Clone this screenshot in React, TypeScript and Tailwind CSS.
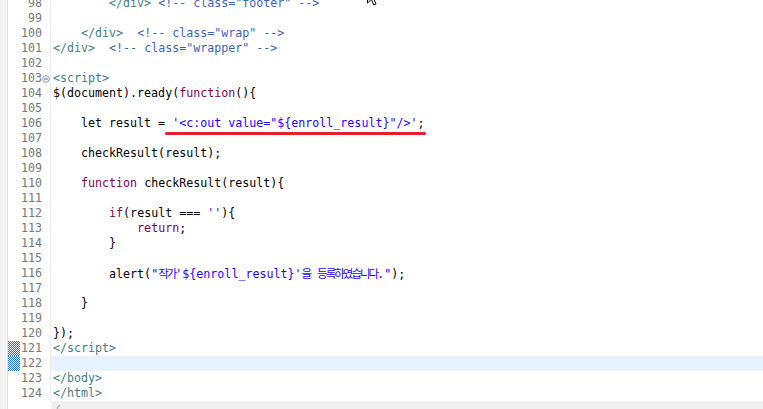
import React from "react";

type Seg = [string, string?];

const T = "text-[#3f7f7f]";
const C = "text-[#3f5fbf]";
const K = "text-[#7f0055]";
const S = "text-[#2a00ff]";

function renderText(text: string, cls: string, key: string) {
  const parts = text.split(/([\uAC00-\uD7A3]+)/);
  return (
    <span key={key} className={cls}>
      {parts.map((p, i) =>
        /[\uAC00-\uD7A3]/.test(p) ? (
          <span
            key={i}
            className="font-['Noto_Sans_CJK_KR',sans-serif] text-[11.5px] tracking-[-2px]"
          >
            {p}
          </span>
        ) : (
          <React.Fragment key={i}>{p}</React.Fragment>
        )
      )}
    </span>
  );
}

const lines: { n: number; segs: Seg[]; fold?: boolean; mark?: boolean; hl?: boolean; underline?: boolean }[] = [
  { n: 98, segs: [["        "], ["</div>", T], [" "], ['<!-- class="footer" -->', C]] },
  { n: 99, segs: [] },
  { n: 100, segs: [["    "], ["</div>", T], ["  "], ['<!-- class="wrap" -->', C]] },
  { n: 101, segs: [["</div>", T], ["  "], ['<!-- class="wrapper" -->', C]] },
  { n: 102, segs: [] },
  { n: 103, segs: [["<script>", T]], fold: true },
  { n: 104, segs: [["$(document).ready("], ["function", K], ["(){"]] },
  { n: 105, segs: [] },
  { n: 106, segs: [["    let result = "]], underline: true },
  { n: 107, segs: [] },
  { n: 108, segs: [["    checkResult(result);"]] },
  { n: 109, segs: [] },
  { n: 110, segs: [["    "], ["function", K], [" checkResult(result){"]] },
  { n: 111, segs: [] },
  { n: 112, segs: [["        "], ["if", K], ["(result === "], ["''", S], ["){"]] },
  { n: 113, segs: [["            "], ["return", K], [";"]] },
  { n: 114, segs: [["        }"]] },
  { n: 115, segs: [] },
  { n: 116, segs: [["        alert("], ["\"작가'${enroll_result}'을 등록하였습니다.\"", S], [");"]] },
  { n: 117, segs: [] },
  { n: 118, segs: [["    }"]] },
  { n: 119, segs: [] },
  { n: 120, segs: [["});"]] },
  { n: 121, segs: [["</script>", T]], mark: true },
  { n: 122, segs: [], mark: true, hl: true },
  { n: 123, segs: [["</body>", T]] },
  { n: 124, segs: [["</html>", T]] },
];

function FoldIcon() {
  return (
    <svg width="8" height="8" viewBox="0 0 8 8" className="block">
      <circle cx="4" cy="4" r="3.4" fill="#eef0f3" stroke="#8d96a3" strokeWidth="0.9" />
      <line x1="2.2" y1="4" x2="5.8" y2="4" stroke="#5d6670" strokeWidth="1" />
    </svg>
  );
}

function Marker({ n }: { n: number }) {
  const id = "chk" + n;
  return (
    <svg width="12" height="15" className="block" shapeRendering="crispEdges">
      <defs>
        <pattern id={id} width="2" height="2" patternUnits="userSpaceOnUse">
          <rect width="2" height="2" fill="#ffffff" />
          <rect width="1" height="1" fill="#1f6fd8" />
          <rect x="1" y="1" width="1" height="1" fill="#1f6fd8" />
        </pattern>
      </defs>
      <rect width="12" height="15" fill={`url(#${id})`} />
    </svg>
  );
}

export default function App() {
  return (
    <div className="relative w-[763px] h-[409px] overflow-hidden bg-white flex font-['DejaVu_Sans_Mono',monospace] text-[11.65px]">
      <div className="w-[8px] h-full bg-[#f3f3f3] border-r border-[#e2e2e2]" />
      <div className="flex-1 flex flex-col">
        <div className="h-[401px] overflow-hidden">
          <div className="-mt-[4px] flex flex-col">
            {lines.map((l) => (
              <div key={l.n} className="flex h-[15px] leading-[15px]">
                <div className="w-[12px] h-full">{l.mark ? <Marker n={l.n} /> : null}</div>
                <div className="w-[22px] text-right text-[#787878] whitespace-pre">{l.n}</div>
                <div className="w-[8px] h-full flex items-center justify-center">
                  {l.fold ? <FoldIcon /> : null}
                </div>
                <div
                  className={
                    l.hl
                      ? "flex-1 h-full border-l border-[#ededed] pl-[2px] bg-[#e8f2fe] whitespace-pre text-black"
                      : "flex-1 h-full border-l border-[#ededed] pl-[2px] whitespace-pre text-black"
                  }
                >
                  {l.segs.map((s, i) => renderText(s[0], s[1] ?? "", String(i)))}
                  {l.underline ? (
                    <span className="relative inline-block h-[15px]">
                      <span className={S}>'&lt;c:out value="${"{"}enroll_result{"}"}"/&gt;'</span>
                      <span>;</span>
                      <span className="absolute left-[-7px] right-[-2px] top-[16px] h-[3px] rounded-full bg-[#e5202a]" />
                    </span>
                  ) : null}
                </div>
              </div>
            ))}
          </div>
        </div>
        <div className="h-[8px] flex">
          <div className="w-[43px] h-full bg-white" />
          <div className="flex-1 h-full bg-[#f0f0f0] flex items-start pl-[4px] pt-[3px]">
            <svg width="8" height="8" viewBox="0 0 8 8" className="block">
              <polyline points="5,1 2,4 5,7" fill="none" stroke="#b5b5b5" strokeWidth="1.2" />
            </svg>
          </div>
        </div>
      </div>
      <svg
        width="12"
        height="19"
        viewBox="0 0 12 19"
        className="absolute left-[367px] top-[-13px]"
      >
        <path d="M0.5 0.5 L0.5 16 L4.3 12.3 L6.8 18 L9 17 L6.6 11.4 L11.5 11.4 Z" fill="#ffffff" stroke="#000000" strokeWidth="1" />
      </svg>
    </div>
  );
}
